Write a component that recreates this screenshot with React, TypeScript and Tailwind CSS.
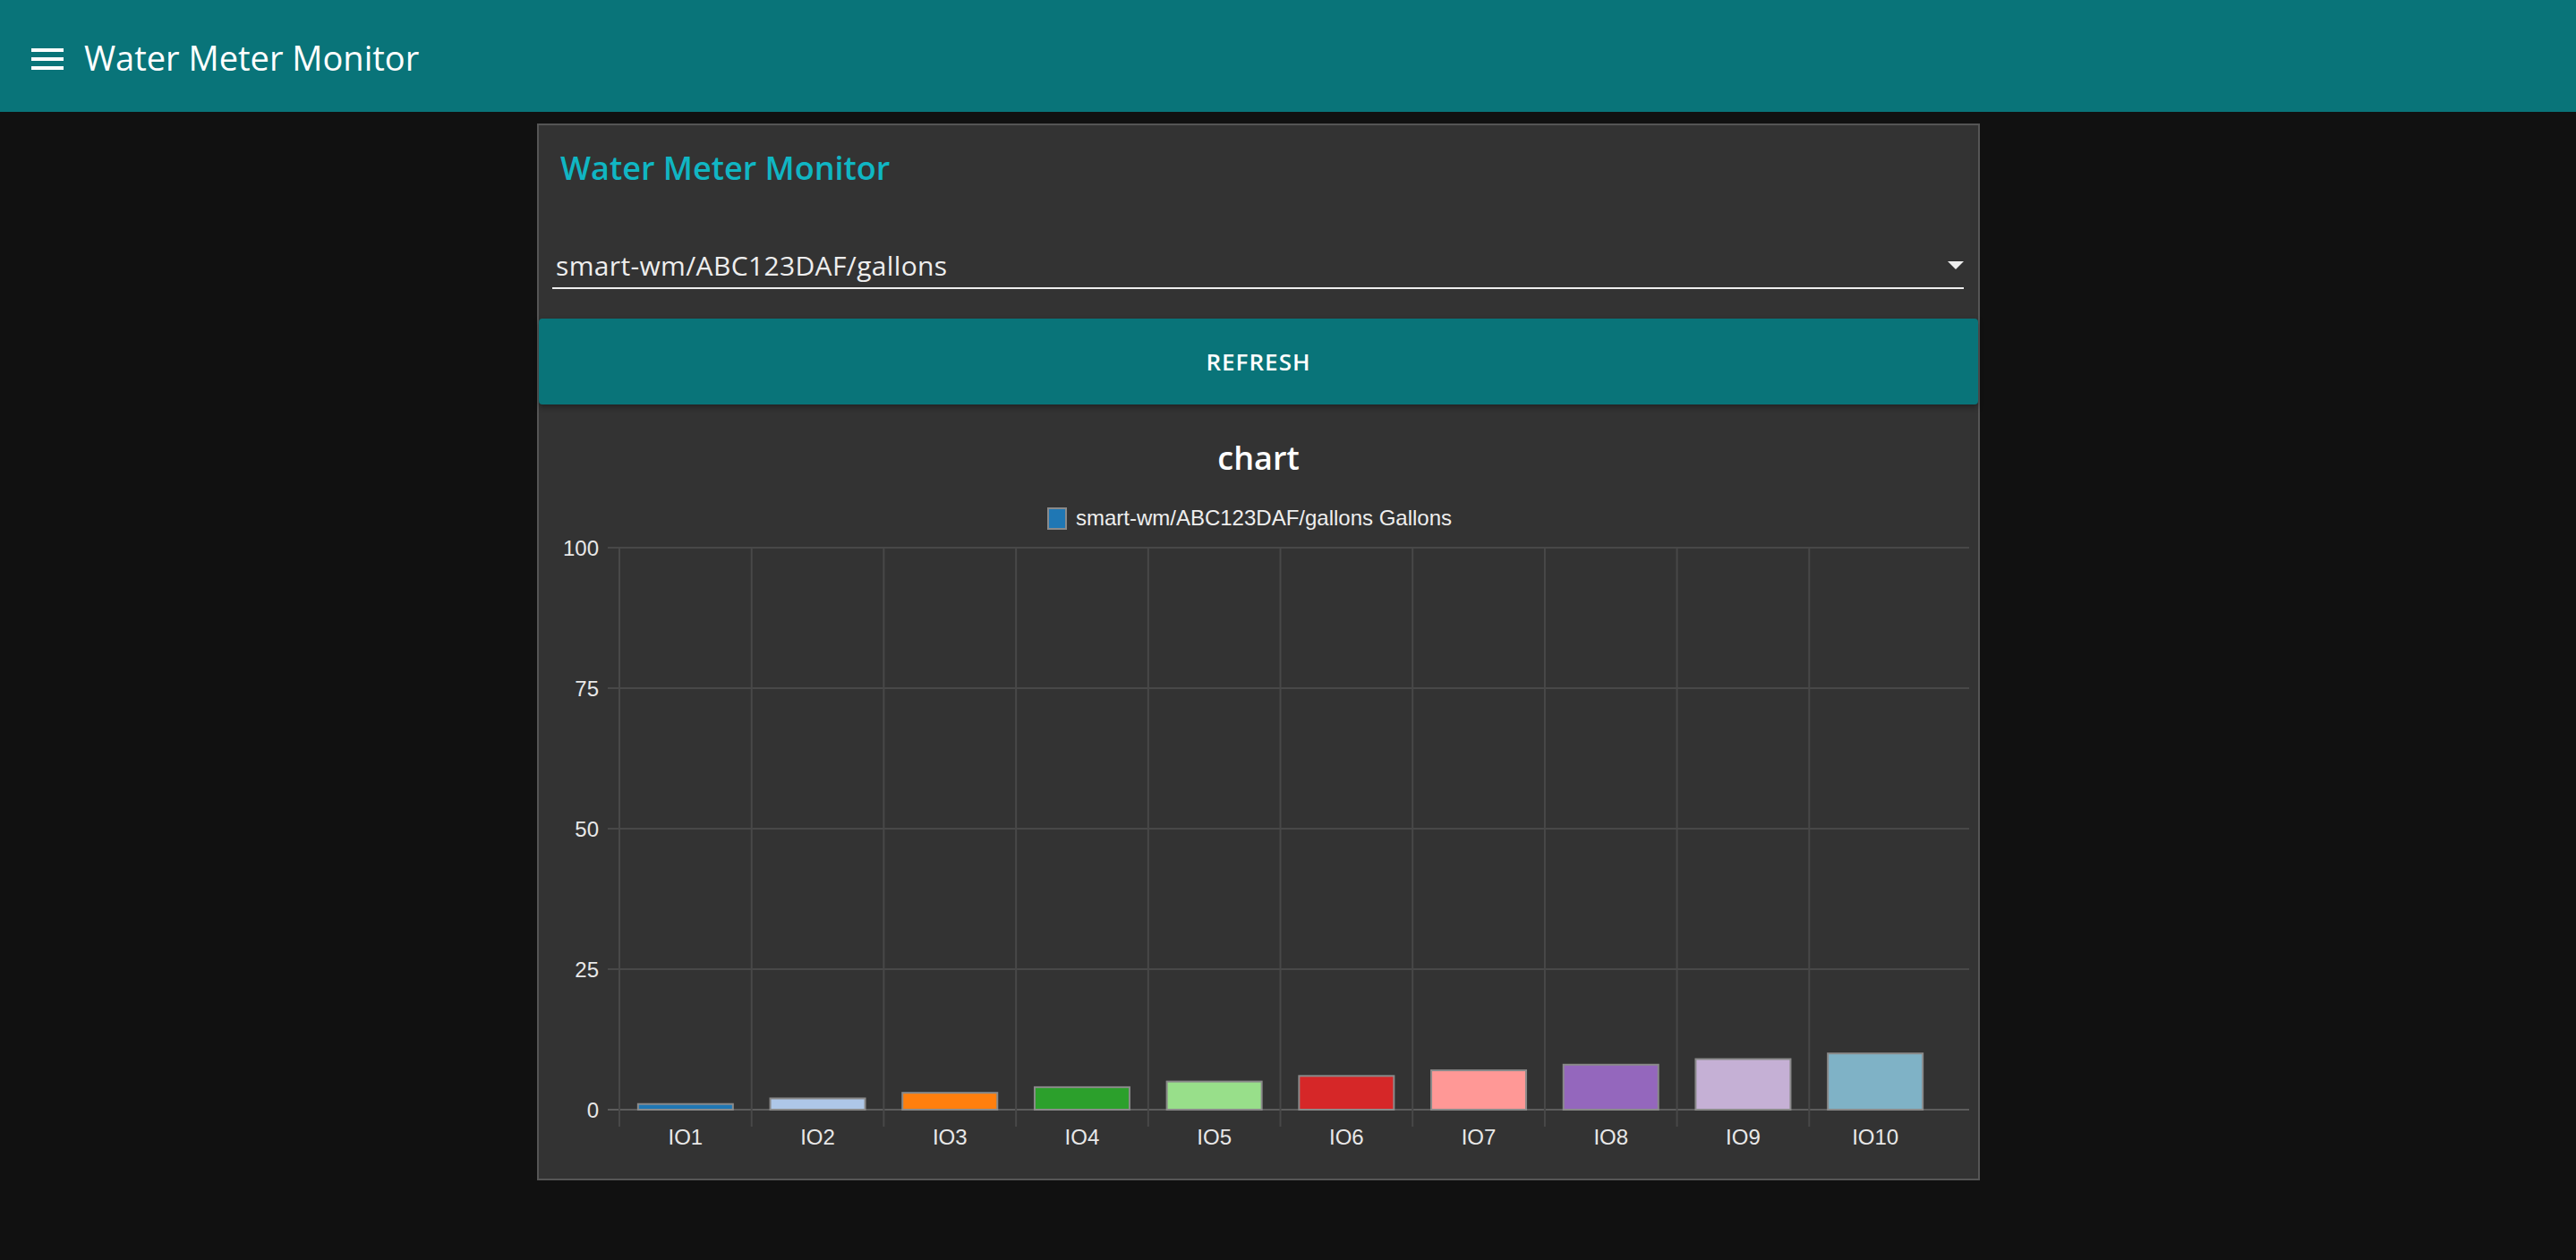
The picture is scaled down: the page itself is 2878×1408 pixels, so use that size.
import { FC } from 'react';

const bars = [
  { label: 'IO1', value: 1, color: '#1f77b4' },
  { label: 'IO2', value: 2, color: '#aec7e8' },
  { label: 'IO3', value: 3, color: '#ff7f0e' },
  { label: 'IO4', value: 4, color: '#2ca02c' },
  { label: 'IO5', value: 5, color: '#98df8a' },
  { label: 'IO6', value: 6, color: '#d62728' },
  { label: 'IO7', value: 7, color: '#ff9896' },
  { label: 'IO8', value: 8, color: '#9467bd' },
  { label: 'IO9', value: 9, color: '#c5b0d5' },
  { label: 'IO10', value: 10, color: '#7fb2c6' },
];

// plot geometry, in svg units (svg origin sits at page x=602, y=600)
const left = 90;
const colW = 147.7;
const top = 13;
const zero = 641;
const unit = (zero - top) / 100;
const ticks = [100, 75, 50, 25, 0];

const Chart: FC = () => (
  <svg width="1608" height="700" className="block" style={{ fontFamily: '"Liberation Sans", Arial, sans-serif' }}>
    {ticks.map((t) => {
      const y = zero - t * unit;
      return (
        <g key={t}>
          <line x1={77} x2={1598} y1={y} y2={y} stroke={t === 0 ? '#5c5c5c' : '#484848'} strokeWidth={2} />
          <text x={67} y={y} textAnchor="end" dominantBaseline="central" fontSize={24} fill="#e8e8e8">
            {t}
          </text>
        </g>
      );
    })}
    {bars.map((b, i) => {
      const x = left + i * colW;
      return <line key={b.label} x1={x} x2={x} y1={top} y2={zero + 19} stroke="#484848" strokeWidth={2} />;
    })}
    {bars.map((b, i) => {
      const cx = left + (i + 0.5) * colW;
      const h = b.value * unit;
      return (
        <g key={b.label}>
          <rect x={cx - 53} y={zero - h} width={106} height={h} fill={b.color} stroke="#8a8a8a" strokeWidth={2} />
          <text x={cx} y={671} textAnchor="middle" dominantBaseline="central" fontSize={24} fill="#e8e8e8">
            {b.label}
          </text>
        </g>
      );
    })}
  </svg>
);

const App: FC = () => {
  return (
    <div className="min-h-screen bg-[#111111]" style={{ fontFamily: '"Open Sans", "Noto Sans", sans-serif' }}>
      <header className="h-[125px] bg-[#097479] flex items-center">
        <svg width="48" height="48" viewBox="0 0 24 24" className="ml-[29px] mt-[6px]" fill="#ffffff">
          <path d="M3 18h18v-2H3v2zm0-5h18v-2H3v2zm0-7v2h18V6H3z" />
        </svg>
        <h1 className="ml-[17px] mt-[2px] text-[38px] text-white font-normal leading-none">
          Water Meter Monitor
        </h1>
      </header>

      <main className="pt-[13px] pb-[90px]">
        <div className="ml-[600px] w-[1612px] bg-[#333333] border-2 border-[#555555]">
          <div className="pt-[26px] pl-[24px] h-[68px]">
            <h2 className="text-[36px] leading-[44px] font-semibold text-[#10b6c3]">
              Water Meter Monitor
            </h2>
          </div>

          <div className="mt-[69px] ml-[15px] mr-[16px] border-b-2 border-[#eeeeee] flex items-center justify-between pl-[4px] pb-[4px]">
            <span className="text-[30px] leading-[40px] tracking-[0.012em] text-[#eeeeee]">smart-wm/ABC123DAF/gallons</span>
            <svg width="18" height="9" viewBox="0 0 18 9" className="-mt-[2px]">
              <path d="M0 0h18L9 9z" fill="#eeeeee" />
            </svg>
          </div>

          <button className="mt-[33px] w-full h-[96px] rounded-[4px] bg-[#097479] text-white text-[26px] font-semibold tracking-[0.04em] shadow-[0_3px_6px_rgba(0,0,0,0.35)]">
            REFRESH
          </button>

          <div className="pt-[38px] pb-[18px] flex flex-col items-center">
            <h3 className="text-[36px] leading-[43px] font-semibold text-white">chart</h3>
            <div
              className="mt-[33px] h-[26px] flex items-center gap-[10px] mr-[20px]"
              style={{ fontFamily: '"Liberation Sans", Arial, sans-serif' }}
            >
              <span className="w-[22px] h-[25px] bg-[#1f77b4] border-2 border-[#8a8a8a]" />
              <span className="text-[24px] text-[#eeeeee]">smart-wm/ABC123DAF/gallons Gallons</span>
            </div>
            <div className="mt-[7px] self-start">
              <Chart />
            </div>
          </div>
        </div>
      </main>
    </div>
  );
};

export default App;
